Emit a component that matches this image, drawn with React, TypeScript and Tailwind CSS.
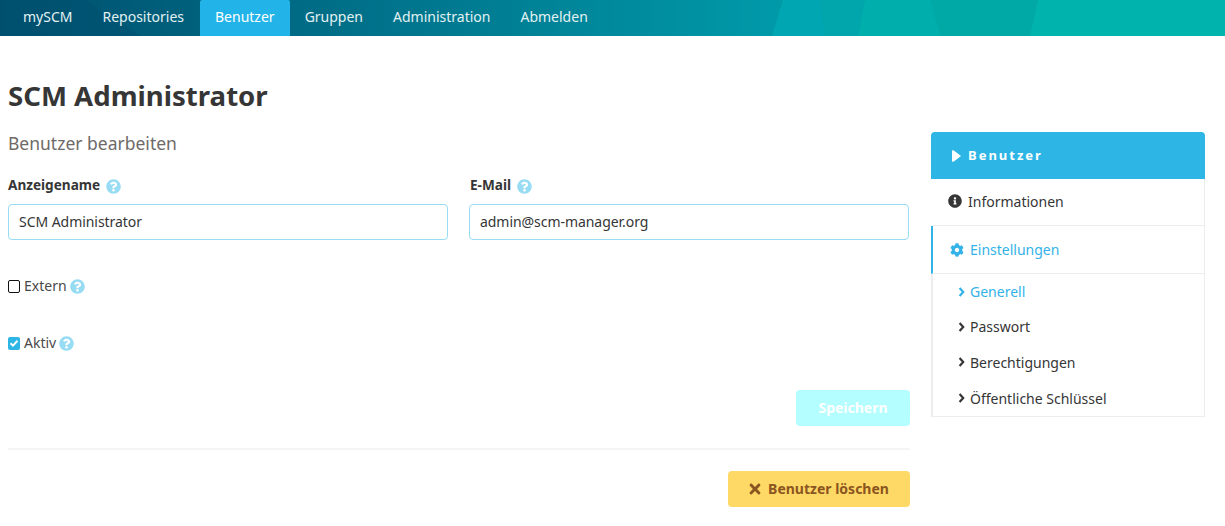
import React from 'react';
import { FaCaretRight, FaCog, FaInfoCircle, FaQuestionCircle, FaTimes } from 'react-icons/fa';

const navItems = ['mySCM', 'Repositories', 'Benutzer', 'Gruppen', 'Administration', 'Abmelden'];
const subItems = ['Generell', 'Passwort', 'Berechtigungen', 'Öffentliche Schlüssel'];

const Help = () => <FaQuestionCircle className="w-[15px] h-[15px] text-[#98dcf4] shrink-0" />;

const Chevron = () => (
  <svg viewBox="0 0 7 10" className="w-[7px] h-[10px] shrink-0">
    <path d="M1.6 1 5.2 5 1.6 9" fill="none" stroke="currentColor" strokeWidth="2.2" />
  </svg>
);

const Field = ({ label, value, inset }: { label: string; value: string; inset?: boolean }) => (
  <div>
    <div className={`flex items-center gap-[6px] h-5 text-[13.6px] font-bold text-[#363636] ${inset ? 'pl-px' : ''}`}>
      <span className="-mt-[2px]">{label}</span>
      <Help />
    </div>
    <input
      readOnly
      value={value}
      className="mt-2 w-full h-9 pl-[10px] pr-[10px] pb-[2px] text-[14px] tracking-[-0.05px] text-[#363636] border border-[#98dcf4] rounded-[4px] outline-none"
    />
  </div>
);

export default function App() {
  return (
    <div className="min-h-screen bg-white text-[#363636] font-['Noto_Sans',sans-serif]">
      {/* Navbar */}
      <nav className="relative h-9 overflow-hidden bg-gradient-to-r from-[#004f6e] via-[#0098a8] via-[62%] to-[#00b5ad]">
        <svg className="absolute inset-0 w-full h-full" viewBox="0 0 1225 36" preserveAspectRatio="none">
          <polygon points="0,0 85,0 140,36 0,36" fill="#00506f" opacity="0.5" />
          <polygon points="783,0 820,0 825,36 772,36" fill="#00a7b3" />
          <polygon points="820,0 865,0 858,36 825,36" fill="#00a6ab" />
          <polygon points="865,0 930,0 941,36 858,36" fill="#00afac" />
          <polygon points="930,0 1038,0 1030,36 941,36" fill="#00a9a5" />
          <polygon points="1038,0 1225,0 1225,36 1030,36" fill="#00b3ad" />
        </svg>
        <ul className="relative flex h-9 pl-[8px]">
          {navItems.map((item) => (
            <li
              key={item}
              className={`h-9 px-[15px] pb-[3px] flex items-center text-[14px] rounded-t-[2px] ${
                item === 'Benutzer' ? 'bg-[#22b4e8] text-white ml-px' : 'text-[#e3f1f3]'
              }`}
            >
              {item}
            </li>
          ))}
        </ul>
      </nav>

      <div className="pl-2 pr-5">
        <h1 className="mt-[42px] h-9 leading-[34px] text-[27.6px] font-bold text-[#363636]">SCM Administrator</h1>

        <div className="flex mt-[17px]">
          {/* Form */}
          <main className="w-[902px] shrink-0">
            <h2 className="h-6 leading-6 text-[17.5px] text-[#6f6a68]">Benutzer bearbeiten</h2>

            <div className="grid grid-cols-[440px_440px] gap-x-[21px] mt-[21px]">
              <Field label="Anzeigename" value="SCM Administrator" />
              <Field label="E-Mail" value="admin@scm-manager.org" inset />
            </div>

            <label className="flex items-center h-5 mt-9 text-[14px] text-[#4a4a4a]">
              <span className="w-[12px] h-[13px] border-[1.5px] border-[#111111] rounded-[2px] mr-1 shrink-0" />
              <span className="-mt-[2px]">Extern</span>
              <span className="ml-[3px]"><Help /></span>
            </label>

            <label className="flex items-center h-5 mt-[37px] text-[14px] text-[#4a4a4a]">
              <span className="w-[12px] h-[13px] bg-[#2db5e5] rounded-[2px] mr-1 shrink-0 flex items-center justify-center">
                <svg viewBox="0 0 12 12" className="w-[12px] h-[12px]">
                  <path d="M2.5 6.2 5 8.6 9.5 3.8" fill="none" stroke="white" strokeWidth="2" />
                </svg>
              </span>
              <span className="-mt-[1px]">Aktiv</span>
              <span className="ml-[3px]"><Help /></span>
            </label>

            <div className="flex justify-end mt-[37px]">
              <button className="w-[114px] h-9 pb-[2px] rounded-[4px] bg-[#b5feff] text-white text-[14px] font-bold">
                Speichern
              </button>
            </div>

            <hr className="mt-[22px] h-[2px] border-0 bg-[#f4f4f4]" />

            <div className="flex justify-end mt-[21px]">
              <button className="w-[182px] h-9 rounded-[4px] bg-[#ffd966] text-[#8a5520] text-[14px] font-bold flex items-center justify-center gap-[7px]">
                <FaTimes className="w-[12px] h-[16px]" />
                <span className="-mt-[2px]">Benutzer löschen</span>
              </button>
            </div>
          </main>

          {/* Sidebar */}
          <aside className="w-[274px] ml-[21px] mt-px h-fit">
            <div className="h-[47px] pl-[21px] flex items-center gap-[6px] rounded-t-[4px] bg-[#2db5e5] text-white text-[13px] font-bold tracking-[2px]">
              <FaCaretRight className="w-[10px] h-[20px]" preserveAspectRatio="none" />
              Benutzer
            </div>
            <div className="border-r border-b border-[#ededed]">
              <div className="h-[47px] pl-[15px] pb-[2px] flex items-center gap-[6px] text-[14px] text-[#363636] border-b border-[#ededed] border-l-[2px] border-l-white">
                <FaInfoCircle className="w-[14px] h-[14px] text-[#363636]" />
                Informationen
              </div>
              <div className="h-[48px] pl-[17px] flex items-center gap-[6px] text-[14px] text-[#33b2e8] border-b border-[#ededed] border-l-[2px] border-l-[#33b2e8]">
                <FaCog className="w-[14px] h-[14px]" />
                Einstellungen
              </div>
              <ul className="border-l-[2px] border-[#ededed] pl-[25px]">
                {subItems.map((item, i) => (
                  <li
                    key={item}
                    className={`flex items-center gap-[5px] text-[14px] ${i < 2 ? 'h-[35px]' : 'h-[36px]'} ${
                      i === 0 ? 'text-[#33b2e8]' : 'text-[#363636]'
                    }`}
                  >
                    <Chevron />
                    {item}
                  </li>
                ))}
              </ul>
            </div>
          </aside>
        </div>
      </div>
    </div>
  );
}
